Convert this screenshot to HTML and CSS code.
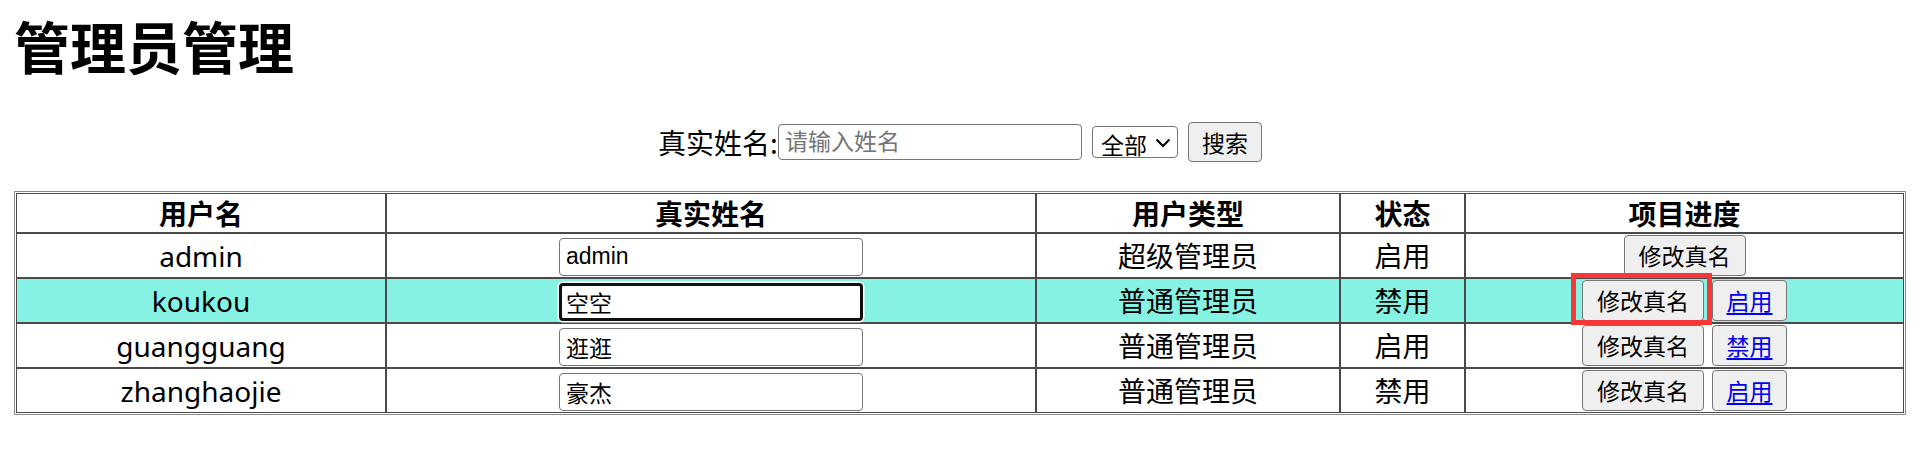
FILE: index.html
```html
<!DOCTYPE html>
<html lang="zh-CN">
<head>
<meta charset="utf-8">
<title>管理员管理</title>
<link rel="stylesheet" href="styles.css">
</head>
<body>
<h1 class="title">管理员管理</h1>
<div class="search">
  <label class="search-label" for="q">真实姓名:</label><input id="q" class="field search-input" type="text" placeholder="请输入姓名">
  <span class="select-wrap">
    <select class="search-select"><option>全部</option></select>
    <svg class="chev" width="16" height="10" viewBox="0 0 16 10"><path d="M1.5 1.5 L8 8 L14.5 1.5" fill="none" stroke="#000" stroke-width="2.2"/></svg>
  </span>
  <button class="btn search-btn">搜索</button>
</div>
<table class="admin-table">
  <colgroup>
    <col class="c1"><col class="c2"><col class="c3"><col class="c4"><col class="c5">
  </colgroup>
  <thead>
    <tr class="head-row"><th>用户名</th><th>真实姓名</th><th>用户类型</th><th>状态</th><th>项目进度</th></tr>
  </thead>
  <tbody>
    <tr class="row">
      <td>admin</td>
      <td><input class="field cell-input" type="text" value="admin"></td>
      <td>超级管理员</td>
      <td>启用</td>
      <td><div class="actions"><button class="btn act-btn">修改真名</button></div></td>
    </tr>
    <tr class="row row-active">
      <td>koukou</td>
      <td><input class="field cell-input focused" type="text" value="空空"></td>
      <td>普通管理员</td>
      <td>禁用</td>
      <td><div class="actions"><span class="marked"><button class="btn act-btn">修改真名</button></span><button class="btn link-btn"><a href="#" class="link">启用</a></button></div></td>
    </tr>
    <tr class="row">
      <td>guangguang</td>
      <td><input class="field cell-input" type="text" value="逛逛"></td>
      <td>普通管理员</td>
      <td>启用</td>
      <td><div class="actions"><button class="btn act-btn">修改真名</button><button class="btn link-btn"><a href="#" class="link">禁用</a></button></div></td>
    </tr>
    <tr class="row">
      <td>zhanghaojie</td>
      <td><input class="field cell-input" type="text" value="豪杰"></td>
      <td>普通管理员</td>
      <td>禁用</td>
      <td><div class="actions"><button class="btn act-btn">修改真名</button><button class="btn link-btn"><a href="#" class="link">启用</a></button></div></td>
    </tr>
  </tbody>
</table>
</body>
</html>
```
FILE: styles.css
```css
html, body { background: #fff; }
body {
  margin: 0 14px;
  font-family: "Noto Sans", "Noto Sans CJK SC", sans-serif;
  font-size: 28px;
  color: #000;
}
.title {
  margin: 8px 0 0;
  font-size: 56px;
  line-height: 74px;
  font-weight: 700;
  font-family: "Noto Sans CJK SC", sans-serif;
}
.search {
  margin-top: 40px;
  height: 40px;
  display: flex;
  justify-content: center;
  align-items: center;
}
.search-label {
  font-family: "Noto Sans CJK SC", sans-serif;
  font-size: 28px;
  line-height: 40px;
}
.field {
  box-sizing: border-box;
  width: 304px;
  height: 38px;
  padding: 0 6px;
  border: 1.5px solid #767676;
  border-radius: 4px;
  background: #fff;
  font-family: "Liberation Sans", "Noto Sans CJK SC", sans-serif;
  font-size: 23px;
  color: #000;
  outline: none;
}
.field::placeholder { color: #757575; font-family: "Noto Sans CJK SC", sans-serif; }
.search-input { height: 36px; }
.select-wrap {
  position: relative;
  display: inline-flex;
  margin-left: 10px;
}
.search-select {
  appearance: none;
  -webkit-appearance: none;
  box-sizing: border-box;
  width: 86px;
  height: 32px;
  padding: 0 0 0 8px;
  border: 1.5px solid #767676;
  border-radius: 4px;
  background: #fff;
  font-family: "Noto Sans CJK SC", sans-serif;
  font-size: 23px;
  color: #000;
}
.chev {
  position: absolute;
  right: 7px;
  top: 12px;
  pointer-events: none;
}
.btn {
  box-sizing: border-box;
  border: 1.5px solid #767676;
  border-radius: 4px;
  background: #efefef;
  font-family: "Noto Sans CJK SC", sans-serif;
  font-size: 23px;
  color: #000;
  padding: 0;
  line-height: 1;
}
.search-btn {
  margin-left: 10px;
  width: 74px;
  height: 40px;
}
.admin-table {
  margin-top: 29px;
  width: 100%;
  table-layout: fixed;
  border-collapse: separate;
  border-spacing: 0;
  border: 1px solid #8a8a8a;
  padding: 1px;
}
.c1 { width: 370px; }
.c2 { width: 650px; }
.c3 { width: 304px; }
.c4 { width: 125px; }
.admin-table th, .admin-table td {
  box-sizing: border-box;
  border: 1px solid #4a4a4a;
  padding: 1px 2px;
  text-align: center;
  vertical-align: middle;
  font-size: 28px;
  line-height: 36px;
}
.admin-table th {
  height: 40px;
  font-family: "Noto Sans CJK SC", sans-serif;
  font-weight: 700;
}
.admin-table td { height: 45px; }
.row-active td { background: #86f2e4; }
.cell-input { display: inline-block; vertical-align: middle; }
.cell-input.focused {
  border: 3px solid #101010;
  padding: 0 4px;
  box-shadow: 0 0 0 1.5px #fff;
}
.actions {
  display: flex;
  justify-content: center;
  align-items: center;
  gap: 8px;
}
.act-btn { width: 122px; height: 41px; }
.link-btn { width: 75px; height: 41px; }
.link { color: #0000ee; text-decoration: underline; text-underline-offset: 3px; }
.marked { position: relative; display: inline-flex; }
.marked::after {
  content: "";
  position: absolute;
  left: -11px;
  right: -8px;
  top: -7px;
  bottom: -4px;
  border: 5px solid #f83838;
  pointer-events: none;
}
```
